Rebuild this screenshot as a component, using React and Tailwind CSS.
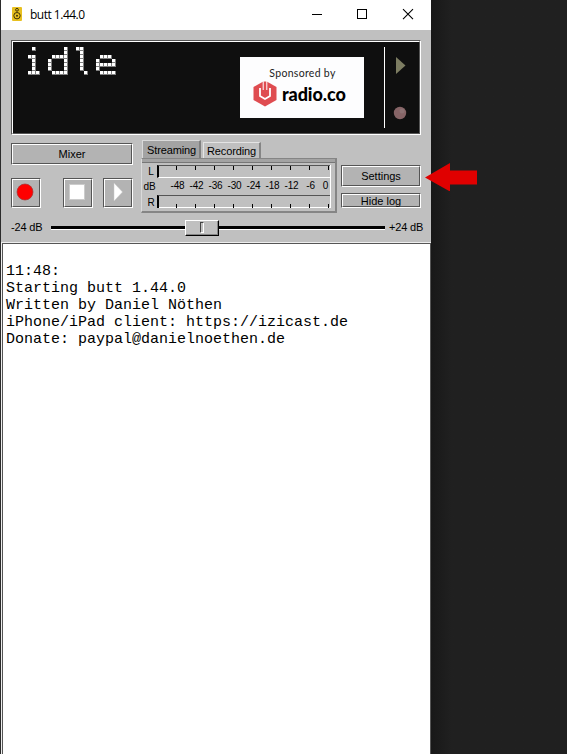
import React from "react";

const outer = "border border-t-[#555] border-l-[#555] border-b-white border-r-white";
const inner = "border border-t-white border-l-white border-b-[#555] border-r-[#555]";

function Engraved({ className = "", fill = "bg-[#b3b3b3]", children }) {
  return (
    <div className={`${outer} ${className} flex shrink-0`}>
      <div className={`${inner} ${fill} flex flex-1 items-center justify-center`}>{children}</div>
    </div>
  );
}

function TitleBar() {
  return (
    <div className="flex h-[30px] shrink-0 items-center bg-white pl-[11px]">
      <svg width="10" height="14" viewBox="0 0 10 14" className="mb-[2px] shrink-0">
        <rect width="10" height="14" rx="1" fill="#e8c020" />
        <circle cx="5" cy="2.8" r="1.4" fill="none" stroke="#3d3108" />
        <circle cx="5" cy="8.7" r="3.2" fill="none" stroke="#3d3108" />
        <circle cx="5" cy="8.7" r="1" fill="#3d3108" />
      </svg>
      <span className="ml-2 flex-1 whitespace-nowrap font-['Open_Sans',sans-serif] text-[12px] leading-[30px] tracking-[-0.5px] text-black">butt 1.44.0</span>
      <svg width="120" height="30" viewBox="311 0 120 30" fill="none" stroke="#000" className="shrink-0">
        <path d="M312 14.5h10M357.500 9.500h9v9h-9z" shapeRendering="crispEdges" />
        <path d="M403 9.200l10 10M413 9.200l-10 10" strokeWidth="1.1" />
      </svg>
    </div>
  );
}

/* Samples the text once per 4px cell and paints each hit as a 3px dot with a grey lower-right edge. */
function DotFilter() {
  return (
    <svg width="0" height="0" className="absolute">
      <filter id="dots" filterUnits="userSpaceOnUse" x="0" y="0" width="120" height="40" colorInterpolationFilters="sRGB">
        <feFlood x="1" y="1" width="1" height="1" floodColor="#fff" result="pt" />
        <feOffset in="pt" x="0" y="0" width="4" height="4" dx="0" dy="0" result="cell" />
        <feTile in="cell" result="grid" />
        <feComposite in="SourceGraphic" in2="grid" operator="in" />
        <feComponentTransfer>
          <feFuncA type="discrete" tableValues="0 1 1" />
        </feComponentTransfer>
        <feMorphology operator="dilate" radius="1" result="dot" />
        <feOffset in="dot" dx="1" dy="0" result="a" />
        <feOffset in="dot" dx="0" dy="1" result="b" />
        <feOffset in="dot" dx="1" dy="1" result="c" />
        <feMerge result="sh">
          <feMergeNode in="a" />
          <feMergeNode in="b" />
          <feMergeNode in="c" />
        </feMerge>
        <feColorMatrix in="sh" type="matrix" values="0 0 0 0 .5  0 0 0 0 .5  0 0 0 0 .5  0 0 0 1 0" result="g" />
        <feMerge>
          <feMergeNode in="g" />
          <feMergeNode in="dot" />
        </feMerge>
      </filter>
    </svg>
  );
}

function StatusText() {
  const dejavu = "inline-block origin-left font-['DejaVu_Sans_Mono',monospace] text-[36px]";
  return (
    <div className="ml-[11px] mt-[1px] flex h-[40px] w-[120px] whitespace-nowrap leading-[40px] text-white [filter:url(#dots)]">
      <span className="w-[24px]"><span className={`${dejavu} [transform:translate(1px,-1.3px)_scaleX(0.75)]`}>i</span></span>
      <span className="w-[24px]"><span className={`${dejavu} [transform:translate(-3.4px,-1.3px)_scaleX(1.23)]`}>d</span></span>
      <span className="w-[24px]"><span className="inline-block origin-left font-['Liberation_Mono',monospace] text-[36.6px] [transform:translate(1.9px,1px)_scaleX(0.65)]">l</span></span>
      <span className="w-[24px]"><span className={`${dejavu} [transform:translate(-2.6px,-1.3px)_scaleX(1.14)]`}>e</span></span>
    </div>
  );
}

function Sponsor() {
  return (
    <div className="mt-[15px] flex h-[61px] w-[124px] flex-col bg-[#fdfdfe]">
      <span className="mt-[9px] pl-px text-center font-['Lato',sans-serif] text-[10.5px] leading-[14px] tracking-[0.3px] text-[#222]">Sponsored by</span>
      <div className="ml-[13px] flex items-center">
        <svg width="24" height="27" viewBox="0 0 24 27">
          <path d="M12 0.500 23.500 7v13L12 26.500 0.500 20V7z" fill="#df4c50" />
          <path d="M7 8v8l5 3 5-3V8" fill="none" stroke="#fff" strokeWidth="1.800" />
          <path d="M9.700 0h4.600v10H9.700z" fill="#fff" />
          <path d="M12 1.500v11" stroke="#df4c50" strokeWidth="2.600" />
          <circle cx="12" cy="13" r="2.900" fill="#df4c50" />
        </svg>
        <span className="ml-[5px] font-['Lato',sans-serif] text-[18px] font-black leading-[24px] tracking-[-0.1px] text-black">radio.co</span>
      </div>
    </div>
  );
}

function Display() {
  return (
    <Engraved className="h-[95px] w-[410px]" fill="bg-[#0f0f0f]">
      <div className="flex h-full w-full">
        <StatusText />
        <div className="ml-[96px]"><Sponsor /></div>
        <div className="ml-5 mt-[5px] h-[81px] w-px bg-white" />
        <svg width="20" height="80" viewBox="0 0 20 80" className="ml-[5px] mt-[5px]">
          <path d="M6 10l9.500 8.500L6 27z" fill="#7d7d62" />
          <circle cx="10" cy="66" r="6.200" fill="#866466" />
          <circle cx="12" cy="64" r="2.500" fill="#8d7273" />
        </svg>
      </div>
    </Engraved>
  );
}

const levels = [-48, -42, -36, -30, -24, -18, -12, -6, 0];

function Ticks({ bottom }) {
  return (
    <div className={`flex h-full pl-[17px] ${bottom ? "items-end" : "items-start"}`}>
      {levels.map((l) => (
        <div key={l} className="flex w-[19px] shrink-0 justify-start">
          <div className="h-[4px] w-px bg-black" />
        </div>
      ))}
    </div>
  );
}

function Meter() {
  return (
    <div className="flex h-[55px] w-[196px] flex-col border-b-2 border-l border-r-2 border-t border-b-[#858585] border-l-[#dadada] border-r-[#858585] border-t-[#858585] bg-[#c0c0c0]">
      <div className="h-[3px] shrink-0 bg-[#a3a3a3]" />
      <div className="h-px shrink-0 bg-[#777]" />
      <div className="mt-[2px] flex">
        <div className="flex w-[15px] flex-col items-center text-[10px] leading-[13px] text-black">
          <span className="h-[13px] pl-[3px]">L</span>
          <span className="h-[17px] leading-[17px]">dB</span>
          <span className="h-[13px] pl-[3px] leading-[15px]">R</span>
        </div>
        <div className="w-[174px] border-r border-white">
          <div className="h-[13px] overflow-hidden border-b border-l-2 border-t border-b-white border-l-black border-t-[#555]"><Ticks /></div>
          <div className="flex h-[17px] pl-[11px] text-[10px] leading-[16px] text-black">
            {levels.map((l) => (
              <span key={l} className="w-[19px] shrink-0 whitespace-nowrap text-center tracking-[-0.2px] last:w-[11px]">{l}</span>
            ))}
          </div>
          <div className="h-[13px] overflow-hidden border-l-2 border-t border-l-black border-t-[#555] shadow-[inset_0_-1px_0_white]"><Ticks bottom /></div>
        </div>
      </div>
    </div>
  );
}

function Controls() {
  return (
    <div className="flex h-[73px] w-[410px] shrink-0 text-[11px]">
      <div className="flex w-[122px] flex-col pt-[3px]">
        <Engraved className="h-[22px] w-[122px]">Mixer</Engraved>
        <div className="mt-[13px] flex">
          <Engraved className="h-[30px] w-[30px]">
            <svg width="20" height="20" viewBox="0 0 20 20" className="mr-[2px] mb-[2px]"><circle cx="10" cy="10" r="8" fill="#f00" stroke="#a33232" strokeWidth=".7" /></svg>
          </Engraved>
          <Engraved className="ml-[22px] h-[30px] w-[30px]">
            <div className="mb-[2px] mr-[2px] h-[16px] w-[16px] border border-[#ccc] bg-white" />
          </Engraved>
          <Engraved className="ml-[10px] h-[30px] w-[30px]">
            <svg width="20" height="22" viewBox="0 0 20 22" className="mb-[2px]"><path d="M6 2v18l8.500-9z" fill="#fff" stroke="#c8c8c8" strokeWidth=".5" /></svg>
          </Engraved>
        </div>
      </div>
      <div className="ml-[8px] flex w-[197px] flex-col">
        <div className="flex h-[18px] items-end pl-px">
          <div className="flex h-[18px] w-[59px] items-center justify-center border-l border-r-2 border-t border-l-[#dadada] border-r-[#808080] border-t-[#dadada] bg-[#a3a3a3] pl-px pt-px tracking-[-0.15px]">Streaming</div>
          <div className="ml-[2px] flex h-[16px] w-[58px] items-center justify-center border-l border-r-2 border-t border-l-[#e4e4e4] border-r-[#858585] border-t-[#e4e4e4] pt-px tracking-[-0.1px]">Recording</div>
        </div>
        <Meter />
      </div>
      <div className="ml-[3px] mt-[25px] flex flex-col gap-[6px]">
        <Engraved className="h-[22px] w-[80px]">Settings</Engraved>
        <Engraved className="h-[15px] w-[80px]"><span className="pt-px leading-[12px]">Hide log</span></Engraved>
      </div>
    </div>
  );
}

function GainSlider() {
  return (
    <div className="mt-[6px] flex h-[18px] shrink-0 items-center text-[11px] tracking-[-0.15px] text-black">
      <span className="w-[40px] whitespace-nowrap pb-[2px] leading-[16px]">-24 dB</span>
      <div className="flex w-[334px] items-center">
        <div className="h-[4px] w-[134px] border-b border-white bg-black" />
        <div className="h-[16px] w-[34px] border border-b-black border-l-white border-r-black border-t-white bg-[#c0c0c0]">
          <div className="flex h-full items-center justify-center border-b border-r border-[#858585]">
            <div className="h-[11px] w-[4px] border border-b-white border-l-[#444] border-r-white border-t-[#444]" />
          </div>
        </div>
        <div className="h-[4px] flex-1 border-b border-white bg-black" />
      </div>
      <span className="ml-[4px] whitespace-nowrap pb-[2px] leading-[16px]">+24 dB</span>
    </div>
  );
}

const log = ["11:48:", "Starting butt 1.44.0", "Written by Daniel Nöthen", "iPhone/iPad client: https://izicast.de", "Donate: paypal@danielnoethen.de"];

export default function App() {
  return (
    <div className="flex h-[754px] w-[567px] overflow-hidden bg-[#202020] font-['Liberation_Sans',Arial,sans-serif] text-black">
      <DotFilter />
      <div className="flex w-[431px] shrink-0 flex-col border-l border-[#2b2b2b] bg-[#c0c0c0]">
        <TitleBar />
        <div className="flex h-[212px] shrink-0 flex-col pl-[10px] pt-[10px]">
          <Display />
          <div className="h-[5px] shrink-0" />
          <Controls />
          <GainSlider />
        </div>
        <div className="flex-1 border-l border-t border-[#eee]">
          <div className="h-full border-l border-r border-t border-[#555] bg-white pl-[3px] pt-[19px] font-['Liberation_Mono',monospace] text-[15px] leading-[17px]">
            {log.map((l) => (
              <div key={l} className="whitespace-pre">{l}</div>
            ))}
          </div>
        </div>
      </div>
      <div className="flex-1 bg-linear-to-r from-[#181818] via-[#202020] via-15% to-[#202020] pt-[163px]">
        <svg width="53" height="28" viewBox="0 0 53 28" className="-ml-[6px]">
          <path d="M0 14.500 25 0v7.500h27v14H25V28.500z" fill="#e00000" />
        </svg>
      </div>
    </div>
  );
}
